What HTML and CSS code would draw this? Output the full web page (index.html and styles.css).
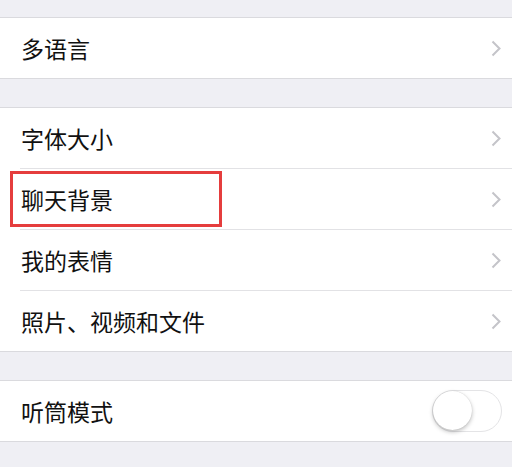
FILE: index.html
```html
<!DOCTYPE html>
<html lang="zh">
<head>
    <meta charset="UTF-8">
    <meta name="viewport" content="width=device-width, initial-scale=1.0">
    <title>通用</title>
    <link rel="stylesheet" href="styles.css">
</head>
<body>
    <div class="group first">
        <div class="row">
            <span class="label">多语言</span>
            <svg class="chevron" viewBox="0 0 10 17"><path d="M1.5 1.5 L8.5 8.5 L1.5 15.5"/></svg>
        </div>
    </div>

    <div class="group">
        <div class="row">
            <span class="label">字体大小</span>
            <svg class="chevron" viewBox="0 0 10 17"><path d="M1.5 1.5 L8.5 8.5 L1.5 15.5"/></svg>
        </div>
        <div class="row">
            <span class="label">聊天背景</span>
            <svg class="chevron" viewBox="0 0 10 17"><path d="M1.5 1.5 L8.5 8.5 L1.5 15.5"/></svg>
            <div class="mark"></div>
        </div>
        <div class="row">
            <span class="label">我的表情</span>
            <svg class="chevron" viewBox="0 0 10 17"><path d="M1.5 1.5 L8.5 8.5 L1.5 15.5"/></svg>
        </div>
        <div class="row">
            <span class="label">照片、视频和文件</span>
            <svg class="chevron" viewBox="0 0 10 17"><path d="M1.5 1.5 L8.5 8.5 L1.5 15.5"/></svg>
        </div>
    </div>

    <div class="group">
        <div class="row">
            <span class="label">听筒模式</span>
            <div class="switch"><div class="knob"></div></div>
        </div>
    </div>
</body>
</html>
```

FILE: styles.css
```css
body {
    margin: 0;
    background: #efeff4;
    font-family: "Noto Sans CJK SC", "Noto Sans", sans-serif;
    color: #111;
}
.group {
    background: #fff;
    border-top: 1px solid #dadade;
    border-bottom: 1px solid #dadade;
    margin-top: 28px;
}
.group.first { margin-top: 17px; }
.row {
    position: relative;
    height: 60px;
    display: flex;
    align-items: center;
    justify-content: space-between;
    padding: 0 11px 0 21px;
}
.row + .row { border-top: 1px solid #e2e2e5; }
.row + .row::before {
    content: "";
    position: absolute;
    left: 0;
    top: -1px;
    width: 20px;
    height: 1px;
    background: #fff;
}
.label {
    font-size: 23px;
    line-height: 1;
}
.chevron {
    width: 10px;
    height: 17px;
    fill: none;
    stroke: #c4c4c9;
    stroke-width: 2;
}
.mark {
    position: absolute;
    left: 10px;
    top: 2px;
    width: 206px;
    height: 50px;
    border: 3px solid #e53d3d;
}
.switch {
    width: 68px;
    height: 40px;
    border: 1px solid #e4e4e6;
    border-radius: 21px;
    background: #fff;
    margin-right: -1px;
}
.knob {
    width: 39px;
    height: 39px;
    border-radius: 50%;
    background: #fff;
    box-shadow: 0 2px 4px rgba(0,0,0,0.25), 0 0 1px rgba(0,0,0,0.2);
    margin: 0;
}
```
